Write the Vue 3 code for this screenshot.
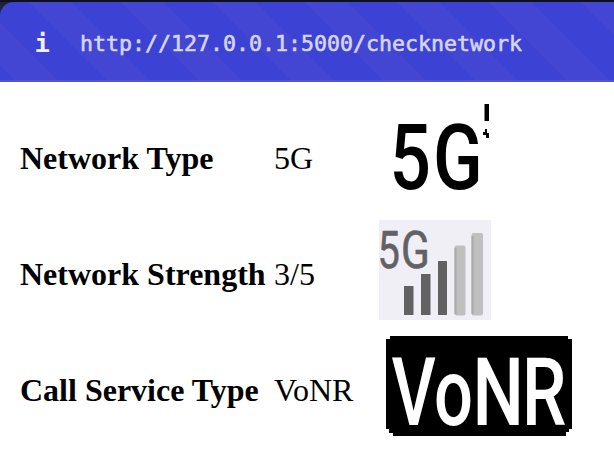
<script setup>
const rows = [
  { label: 'Network Type', value: '5G', icon: 'type' },
  { label: 'Network Strength', value: '3/5', icon: 'strength' },
  { label: 'Call Service Type', value: 'VoNR', icon: 'call' },
]
</script>

<template>
  <div class="window">
    <header class="bar">
      <span class="info">i</span>
      <span class="url">http://127.0.0.1:5000/checknetwork</span>
    </header>
    <main class="rows">
      <div v-for="row in rows" :key="row.label" class="row">
        <span class="label">{{ row.label }}</span>
        <span class="value">{{ row.value }}</span>
        <svg v-if="row.icon === 'type'" class="icon" width="200" height="100" viewBox="0 0 200 100">
          <text class="big" transform="translate(10.5 84.5) scale(.81 1)">5</text>
          <text class="big" transform="translate(54 84.5) scale(.81 1)">G</text>
          <path d="M105.5 0h4.5v17h-4.500zM106 25h2v4h2v5h-3v-3h-3v-3h2z" fill="#000" />
        </svg>
        <svg v-else-if="row.icon === 'strength'" class="icon" width="200" height="100" viewBox="0 0 200 100">
          <rect width="112" height="100" fill="#f0eff6" />
          <text class="small" transform="translate(-1.5 47.5) scale(.78 1)">5</text>
          <text class="small" transform="translate(22 47.5) scale(.83 1)">G</text>
          <g fill="#626264">
            <rect x="25" y="66" width="9.5" height="29" />
            <rect x="42" y="54" width="9.5" height="41" />
            <rect x="59" y="41" width="9" height="54" />
          </g>
          <g fill="#bfbfbf">
            <rect x="75.5" y="25.5" width="11" height="70" rx="2" />
            <rect x="92.5" y="13" width="11.5" height="82.5" rx="2" />
          </g>
          <path d="M76.5 28V94M93.5 16V94" stroke="#aaa" stroke-width="2" />
        </svg>
        <svg v-else class="icon" width="200" height="100" viewBox="0 0 200 100">
          <path d="M11 0H189V3H193V93H190V96H187V100H14V97H10V93H7V3H11Z" fill="#000" />
          <text class="vonr" transform="translate(12.5 88.5) scale(.73 1)">V</text>
          <text class="vonr" transform="translate(55 88.5) scale(.73 1)">o</text>
          <text class="vonr" transform="translate(93.5 88.5) scale(.77 1)">N</text>
          <text class="vonr" transform="translate(143 88.5) scale(.75 1)">R</text>
        </svg>
      </div>
    </main>
  </div>
</template>

<style>
body {
  margin: 0;
  background: #fff;
}
</style>

<style scoped>
.window {
  height: 466px;
  overflow: hidden;
  border-top: 2px solid #10101c;
  box-sizing: border-box;
  background: linear-gradient(90deg, #1f2238, #10101c 80px) 0 0 / 100% 20px no-repeat;
}
.bar {
  height: 80px;
  box-sizing: border-box;
  display: flex;
  align-items: center;
  padding: 4px 0 0 34.5px;
  border-bottom: 2px solid #5553d3;
  border-top-left-radius: 14px;
  background: repeating-linear-gradient(45deg, #3c42d3 0 10.5px, #4346d2 10.5px 41px, #3c42d3 41px 65px);
  font-family: "DejaVu Sans Mono", monospace;
}
.info {
  width: 45.5px;
  color: #f0f0ff;
  font-size: 25.5px;
  font-weight: 700;
}
.url {
  color: #d5d5f7;
  font-size: 21.6px;
  -webkit-text-stroke: .6px #d5d5f7;
}
.rows {
  display: grid;
  grid-auto-rows: 100px;
  row-gap: 16px;
  padding: 22px 0 0 20px;
}
.row {
  display: grid;
  grid-template-columns: 254px 105px 200px;
  align-items: center;
  color: #000;
  font: 32px/36px "Liberation Serif", "Times New Roman", serif;
}
.label {
  font-weight: 700;
}
.label,
.value {
  padding-top: 8px;
}
.icon {
  display: block;
  overflow: visible;
}
.big {
  font: 500 90px Roboto, sans-serif;
}
.small {
  font: 400 51px Roboto, sans-serif;
  fill: #626264;
  stroke: #626264;
  stroke-width: .6;
}
.vonr {
  font: 500 94px Roboto, sans-serif;
  fill: #fff;
}
</style>
